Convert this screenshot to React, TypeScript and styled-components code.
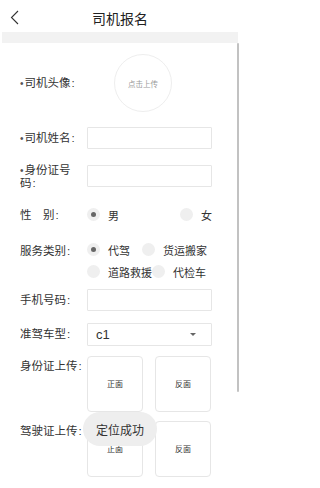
import React from 'react';
import styled, { createGlobalStyle } from 'styled-components';

const GlobalStyle = createGlobalStyle`
  html, body {
    margin: 0;
    padding: 0;
    height: 488px;
    overflow: hidden;
    background: #fff;
  }
  body {
    font-family: 'Noto Sans CJK SC', 'Noto Sans', sans-serif;
    color: #333;
  }
`;

const Page = styled.div`
  position: relative;
  width: 240px;
  height: 488px;
  overflow: hidden;
  background: #fff;
`;

const Header = styled.div`
  height: 32px;
  display: flex;
  align-items: center;
  justify-content: center;
  position: relative;
`;

const BackButton = styled.div`
  position: absolute;
  left: 8px;
  top: 9px;
  width: 12px;
  height: 16px;
  display: flex;
  align-items: center;
  justify-content: center;
`;

const Title = styled.h1`
  margin: 4px 0 0;
  font-size: 14px;
  font-weight: 400;
  color: #222;
  line-height: 20px;
`;

const Band = styled.div`
  height: 11px;
  margin: 0 2px;
  background: #f2f2f2;
`;

const Form = styled.div`
  padding: 0 28px 0 20px;
`;

const Row = styled.div<{ $mt: number; $align?: string }>`
  display: flex;
  align-items: ${(p) => p.$align ?? 'center'};
  margin-top: ${(p) => p.$mt}px;
`;

const Label = styled.div<{ $lh?: number }>`
  width: 62px;
  margin-right: 5px;
  flex-shrink: 0;
  font-size: 11.5px;
  line-height: ${(p) => p.$lh ?? 13}px;
  color: #333;
`;

const Dot = styled.span`
  font-family: 'Liberation Sans', sans-serif;
  font-size: 10px;
  line-height: 1;
  color: #555;
  margin-right: 1px;
`;

const Colon = styled.span`
  font-family: 'Liberation Sans', sans-serif;
  line-height: 1;
  margin-left: 1px;
`;

const AvatarCircle = styled.div`
  width: 56px;
  height: 56px;
  margin-left: 27px;
  border: 1px solid #eeeeee;
  border-radius: 50%;
  display: flex;
  align-items: center;
  justify-content: center;
  font-size: 7.5px;
  color: #9a9a9a;
`;

const Input = styled.div`
  width: 123px;
  height: 20px;
  border: 1px solid #e6e6e6;
  border-radius: 1px;
`;

const Select = styled.div`
  width: 113px;
  height: 21px;
  padding: 0 5px 0 8px;
  border: 1px solid #e6e6e6;
  border-radius: 1px;
  display: flex;
  align-items: center;
  justify-content: space-between;
  font-family: 'Liberation Sans', sans-serif;
  font-size: 13px;
  color: #333;
`;

const Caret = styled.span`
  width: 0;
  height: 0;
  margin-right: 10px;
  border-left: 3px solid transparent;
  border-right: 3px solid transparent;
  border-top: 3px solid #666;
`;

const Options = styled.div`
  width: 126px;
  display: flex;
  flex-wrap: wrap;
`;

const Option = styled.div<{ $width?: number }>`
  display: flex;
  align-items: center;
  height: 22px;
  width: ${(p) => (p.$width ? `${p.$width}px` : 'auto')};
  font-size: 11px;
  color: #333;
`;

const Radio = styled.span<{ $checked?: boolean }>`
  width: 13px;
  height: 13px;
  border-radius: 50%;
  background: #efefef;
  margin-right: 8px;
  flex-shrink: 0;
  display: flex;
  align-items: center;
  justify-content: center;

  &::after {
    content: '';
    width: 5px;
    height: 5px;
    border-radius: 50%;
    background: ${(p) => (p.$checked ? '#666' : 'transparent')};
  }
`;

const UploadGroup = styled.div`
  display: flex;
  gap: 12px;
`;

const UploadBox = styled.div`
  width: 54px;
  height: 54px;
  border: 1px solid #e6e6e6;
  border-radius: 4px;
  display: flex;
  align-items: center;
  justify-content: center;
  font-size: 8px;
  color: #333;
`;

const Toast = styled.div`
  position: absolute;
  left: 83px;
  top: 412px;
  width: 74px;
  height: 34px;
  border-radius: 17px;
  background: #eeeeee;
  display: flex;
  align-items: center;
  justify-content: center;
  font-size: 12px;
  color: #333;
`;

const ScrollThumb = styled.div`
  position: absolute;
  right: 1px;
  top: 43px;
  width: 2px;
  height: 349px;
  background: #c2c2c2;
  border-radius: 1px;
`;

const Required: React.FC<{ children: React.ReactNode }> = ({ children }) => (
  <>
    <Dot>•</Dot>
    {children}
    <Colon>:</Colon>
  </>
);

const App: React.FC = () => {
  return (
    <Page>
      <GlobalStyle />
      <Header>
        <BackButton>
          <svg width="9" height="15" viewBox="0 0 9 15">
            <path d="M8 1 L1.5 7.5 L8 14" fill="none" stroke="#333" strokeWidth="1.1" />
          </svg>
        </BackButton>
        <Title>司机报名</Title>
      </Header>
      <Band />
      <Form>
        <Row $mt={11}>
          <Label>
            <Required>司机头像</Required>
          </Label>
          <AvatarCircle>点击上传</AvatarCircle>
        </Row>
        <Row $mt={15}>
          <Label>
            <Required>司机姓名</Required>
          </Label>
          <Input />
        </Row>
        <Row $mt={14}>
          <Label>
            <Required>身份证号码</Required>
          </Label>
          <Input />
        </Row>
        <Row $mt={14}>
          <Label>
            性　别<Colon>:</Colon>
          </Label>
          <Options>
            <Option $width={93}>
              <Radio $checked />男
            </Option>
            <Option>
              <Radio />女
            </Option>
          </Options>
        </Row>
        <Row $mt={13} $align="flex-start">
          <Label $lh={22}>
            服务类别<Colon>:</Colon>
          </Label>
          <Options>
            <Option $width={55}>
              <Radio $checked />代驾
            </Option>
            <Option>
              <Radio />货运搬家
            </Option>
            <Option>
              <Radio />道路救援
            </Option>
            <Option>
              <Radio />代检车
            </Option>
          </Options>
        </Row>
        <Row $mt={6}>
          <Label>
            手机号码<Colon>:</Colon>
          </Label>
          <Input />
        </Row>
        <Row $mt={12}>
          <Label>
            准驾车型<Colon>:</Colon>
          </Label>
          <Select>
            c1
            <Caret />
          </Select>
        </Row>
        <Row $mt={10} $align="flex-start">
          <Label $lh={18}>
            身份证上传<Colon>:</Colon>
          </Label>
          <UploadGroup>
            <UploadBox>正面</UploadBox>
            <UploadBox>反面</UploadBox>
          </UploadGroup>
        </Row>
        <Row $mt={9} $align="flex-start">
          <Label $lh={18}>
            驾驶证上传<Colon>:</Colon>
          </Label>
          <UploadGroup>
            <UploadBox>正面</UploadBox>
            <UploadBox>反面</UploadBox>
          </UploadGroup>
        </Row>
      </Form>
      <ScrollThumb />
      <Toast>定位成功</Toast>
    </Page>
  );
};

export default App;
